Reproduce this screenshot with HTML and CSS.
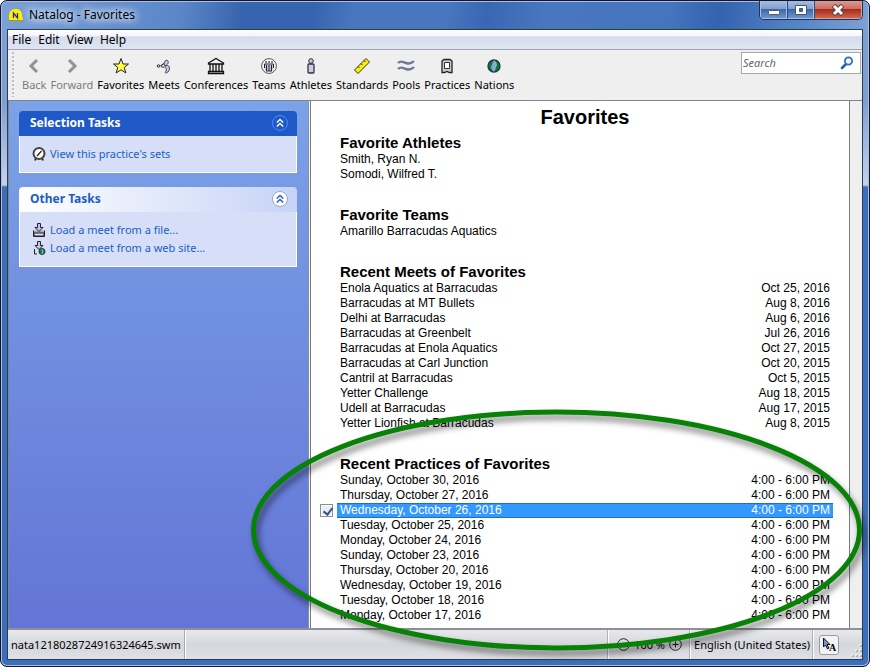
FILE: index.html
```html
<!DOCTYPE html>
<html lang="en">
<head>
<meta charset="utf-8">
<title>Natalog - Favorites</title>
<link rel="stylesheet" href="styles.css">
</head>
<body>
<div class="window">
  <header class="titlebar">
    <svg class="app-icon" width="16" height="16" viewBox="0 0 16 16"><path d="M1 13V8a6 6 0 0 1 6-6h2a6 6 0 0 1 5 6l1 5z" fill="#ffee00"/><path d="M1 13.500h14" stroke="#a89a20"/><path d="M5.500 11V6l4 5V6" fill="none" stroke="#1a2da0" stroke-width="1.300"/></svg>
    <h1 class="window-title">Natalog - Favorites</h1>
    <div class="window-controls">
      <button class="control" type="button" aria-label="Minimize"><svg width="14" height="12" viewBox="0 0 14 12"><rect x="1.500" y="6.500" width="11" height="4" rx="1" fill="#fff" stroke="#4b5670"/></svg></button>
      <button class="control" type="button" aria-label="Maximize"><svg width="14" height="12" viewBox="0 0 14 12"><path fill-rule="evenodd" d="M1.500 1.500h11v9h-11zM5.500 4.500v3h3v-3z" fill="#fff" stroke="#4b5670"/></svg></button>
      <button class="control close" type="button" aria-label="Close"><svg width="14" height="12" viewBox="0 0 14 12"><path d="M2.500 1.500L11.500 10.500M11.500 1.500L2.500 10.500" stroke="#5a4048" stroke-width="5"/><path d="M3 2l8 8M11 2l-8 8" stroke="#fff" stroke-width="3"/></svg></button>
    </div>
  </header>
  <div class="client">
    <nav class="menubar">
      <button type="button">File</button><button type="button">Edit</button><button type="button">View</button><button type="button">Help</button>
    </nav>
    <div class="toolbar">
      <div class="grip"></div>
      <div class="tools">
        <button type="button" disabled><svg width="18" height="18" viewBox="0 0 18 18"><path d="M12 3L6 9l6 6" fill="none" stroke="#929292" stroke-width="3"/></svg>Back</button>
        <button type="button" disabled><svg width="18" height="18" viewBox="0 0 18 18"><path d="M6 3l6 6-6 6" fill="none" stroke="#929292" stroke-width="3"/></svg>Forward</button>
        <button type="button"><svg width="18" height="18" viewBox="0 0 18 18"><path d="M9 1.500l2 5.500h5.500l-4.300 3.500 1.700 5.500L9 12.800 4.100 16l1.700-5.500L1.500 7H7z" fill="#ffff45" stroke="#222"/></svg>Favorites</button>
        <button type="button"><svg width="18" height="18" viewBox="0 0 18 18"><circle cx="3.500" cy="9" r="1.300" fill="#aaa" stroke="#444"/><path d="M5.500 9L9 6.500M6 9.500l3 1" stroke="#444" stroke-width="1.300"/><path d="M9 7c0-3 3-5 4-3s-1 4-3 5zM9.500 10c1-2 5-2 5 1 0 2-1 4-3 5-2 0-1-1-.500-2 1-2 0-3-1.500-4z" fill="#c8cbe8" stroke="#444"/></svg>Meets</button>
        <button type="button"><svg width="18" height="18" viewBox="0 0 18 18"><path d="M1.500 6L9 1.500 16.500 6v1h-15zM3 7v7M6 7v7M9 7v7M12 7v7M15 7v7M1.500 14.500h15v2h-15z" fill="none" stroke="#111" stroke-width="1.300"/></svg>Conferences</button>
        <button type="button"><svg width="18" height="18" viewBox="0 0 18 18"><circle cx="9" cy="9" r="7.400" fill="#f8f8fa" stroke="#555"/><path d="M4.500 7.500h9v6h-9z" fill="#c3c7e4"/><path d="M4.500 7v4M13.500 7v4M4.500 7h9M6.500 8v6M9 8v6M11.500 8v6M6 14h6" fill="none" stroke="#222"/><circle cx="6" cy="5" r="1" fill="#556"/><circle cx="9" cy="5" r="1" fill="#556"/><circle cx="12" cy="5" r="1" fill="#556"/></svg>Teams</button>
        <button type="button"><svg width="18" height="18" viewBox="0 0 18 18"><circle cx="9" cy="4" r="2.300" fill="#c3c7e4" stroke="#333"/><rect x="6" y="7" width="6" height="9" rx="1" fill="#c9cbea" stroke="#333" stroke-width="1.300"/></svg>Athletes</button>
        <button type="button"><svg width="18" height="18" viewBox="0 0 18 18"><path d="M1.500 13L13 1.500 16.500 5 5 16.500z" fill="#ffee00" stroke="#333"/><path d="M5 9.500l1.500 1.500M8 6.500L9.500 8M11 3.500L12.500 5" stroke="#333"/></svg>Standards</button>
        <button type="button"><svg width="18" height="18" viewBox="0 0 18 18"><path d="M1 6c3-3 5-1 8 0s5 1 8-2M1 12c3-3 5-1 8 0s5 1 8-2" fill="none" stroke="#73779a" stroke-width="2.400"/></svg>Pools</button>
        <button type="button"><svg width="18" height="18" viewBox="0 0 18 18"><path d="M4 15.500V4L6 2.500h6L14 4v11.500h-2.500L9 14.500l-2.500 1z" fill="#c9c9d0" stroke="#222" stroke-width="1.300"/><path d="M6.500 5.500h5v6h-5z" fill="#fff" stroke="#333"/></svg>Practices</button>
        <button type="button"><svg width="18" height="18" viewBox="0 0 18 18"><circle cx="9" cy="9" r="6" fill="#087c36" stroke="#234" stroke-width="1.300"/><path d="M9 3.500C7 5 8 7 6.500 9s1 3 1.500 5.500c3 0 2-3 3.500-5S11 4 9 3.500z" fill="#82acd5"/></svg>Nations</button>
      </div>
      <label class="search"><input type="text" placeholder="Search" aria-label="Search"><svg width="14" height="14" viewBox="0 0 14 14"><path d="M6 8l-4 4" stroke="#285cae" stroke-width="2.600" stroke-linecap="round"/><circle cx="8.500" cy="5" r="3.600" fill="#eef5ff" stroke="#2e70bd" stroke-width="1.800"/></svg></label>
    </div>
    <main class="body">
      <aside class="sidebar">
        <section class="tasks primary">
          <header><h2>Selection Tasks</h2><button type="button" aria-label="Collapse Selection Tasks"><svg width="16" height="16" viewBox="0 0 16 16"><circle cx="8" cy="8" r="7.500"/><path d="M4.800 7.500L8 4.500l3.200 3M4.800 11.500L8 8.500l3.200 3"/></svg></button></header>
          <ul><li><svg width="14" height="14" viewBox="0 0 14 14"><path d="M4 11l-1 2.500M10 11l1 2.500" stroke="#333" stroke-width="2"/><circle cx="7" cy="6.500" r="5.500" fill="#fff" stroke="#444" stroke-width="2"/><path d="M5 9l4.500-5" stroke="#222" stroke-width="1.300"/></svg><a href="#">View this practice's sets</a></li></ul>
        </section>
        <section class="tasks">
          <header><h2>Other Tasks</h2><button type="button" aria-label="Collapse Other Tasks"><svg width="16" height="16" viewBox="0 0 16 16"><circle cx="8" cy="8" r="7.500"/><path d="M4.800 7.500L8 4.500l3.200 3M4.800 11.500L8 8.500l3.200 3"/></svg></button></header>
          <ul>
            <li><svg width="14" height="14" viewBox="0 0 14 14"><path d="M1.500 7.500v6h11v-6M2 10h10v3H2z" fill="#aaa" stroke="#222"/><path d="M5.500.500h3v4H11L7 8.500 3 4.500h2.500z" fill="#c3c3ee" stroke="#222"/></svg><a href="#">Load a meet from a file...</a></li>
            <li><svg width="14" height="14" viewBox="0 0 14 14"><path d="M5 13H2.500V8" fill="none" stroke="#222"/><path d="M5.500.500h3v4H11L7 8.500 3 4.500h2.500z" fill="#c3c3ee" stroke="#222"/><circle cx="10" cy="10.500" r="3" fill="#168044" stroke="#234"/><path d="M9.500 8l1.500 2-1 3" stroke="#8cb" fill="none"/></svg><a href="#">Load a meet from a web site...</a></li>
          </ul>
        </section>
      </aside>
      <div class="splitter"></div>
      <article class="page">
        <h2 class="page-title">Favorites</h2>
        <section><h3>Favorite Athletes</h3><table><tr><td>Smith, Ryan N.</td></tr><tr><td>Somodi, Wilfred T.</td></tr></table></section>
        <section><h3>Favorite Teams</h3><table><tr><td>Amarillo Barracudas Aquatics</td></tr></table></section>
        <section><h3>Recent Meets of Favorites</h3>
          <table>
            <tr><td>Enola Aquatics at Barracudas</td><td>Oct 25, 2016</td></tr>
            <tr><td>Barracudas at MT Bullets</td><td>Aug 8, 2016</td></tr>
            <tr><td>Delhi at Barracudas</td><td>Aug 6, 2016</td></tr>
            <tr><td>Barracudas at Greenbelt</td><td>Jul 26, 2016</td></tr>
            <tr><td>Barracudas at Enola Aquatics</td><td>Oct 27, 2015</td></tr>
            <tr><td>Barracudas at Carl Junction</td><td>Oct 20, 2015</td></tr>
            <tr><td>Cantril at Barracudas</td><td>Oct 5, 2015</td></tr>
            <tr><td>Yetter Challenge</td><td>Aug 18, 2015</td></tr>
            <tr><td>Udell at Barracudas</td><td>Aug 17, 2015</td></tr>
            <tr><td>Yetter Lionfish at Barracudas</td><td>Aug 8, 2015</td></tr>
          </table>
        </section>
        <section><h3>Recent Practices of Favorites</h3>
          <table>
            <tr><td>Sunday, October 30, 2016</td><td>4:00 - 6:00 PM</td></tr>
            <tr><td>Thursday, October 27, 2016</td><td>4:00 - 6:00 PM</td></tr>
            <tr class="selected"><td><input id="practice-1026" type="checkbox" checked><label for="practice-1026">Wednesday, October 26, 2016</label></td><td>4:00 - 6:00 PM</td></tr>
            <tr><td>Tuesday, October 25, 2016</td><td>4:00 - 6:00 PM</td></tr>
            <tr><td>Monday, October 24, 2016</td><td>4:00 - 6:00 PM</td></tr>
            <tr><td>Sunday, October 23, 2016</td><td>4:00 - 6:00 PM</td></tr>
            <tr><td>Thursday, October 20, 2016</td><td>4:00 - 6:00 PM</td></tr>
            <tr><td>Wednesday, October 19, 2016</td><td>4:00 - 6:00 PM</td></tr>
            <tr><td>Tuesday, October 18, 2016</td><td>4:00 - 6:00 PM</td></tr>
            <tr><td>Monday, October 17, 2016</td><td>4:00 - 6:00 PM</td></tr>
          </table>
        </section>
      </article>
    </main>
    <footer class="statusbar">
      <div class="cell file">nata1218028724916324645.swm</div>
      <div class="cell zoom">
        <button type="button" aria-label="Zoom out"><svg width="13" height="13" viewBox="0 0 13 13"><circle cx="6.500" cy="6.500" r="5.800"/><path d="M3.500 6.500h6"/></svg></button>
        <span>100 %</span>
        <button type="button" aria-label="Zoom in"><svg width="13" height="13" viewBox="0 0 13 13"><circle cx="6.500" cy="6.500" r="5.800"/><path d="M3.500 6.500h6M6.500 3.500v6"/></svg></button>
      </div>
      <div class="cell language">English (United States)</div>
      <div class="cell last">
        <button class="mode" type="button" aria-label="Text selection"><svg width="18" height="18" viewBox="0 0 18 18"><path d="M3.500 2v9l2-2 2 4 1.500-1-2-3.500H10z" fill="#7b94c8" stroke="#111"/></svg><span>A</span></button>
        <svg class="resize" width="11" height="15" viewBox="0 0 11 15"><path d="M9 2h2M5 7h2M9 7h2M1 12h2M5 12h2M9 12h2" stroke="#a9a9ad" stroke-width="2"/><path d="M8 1h2M4 6h2M8 6h2M0 11h2M4 11h2M8 11h2" stroke="#fff" stroke-width="1"/></svg>
      </div>
    </footer>
  </div>
  <svg class="callout" viewBox="0 0 611 242" preserveAspectRatio="none"><ellipse cx="305.500" cy="121" rx="303" ry="118"/></svg>
</div>
</body>
</html>
```
FILE: styles.css
```css
* { box-sizing: border-box; }
body { margin: 0; background: #fff; color: #000; font: 11px/16px "Noto Sans", "Liberation Sans", sans-serif; }
h1, h2, h3, ul { margin: 0; padding: 0; font-size: inherit; }
button { margin: 0; padding: 0; border: 0; background: none; color: inherit; font: inherit; }
svg { display: block; flex: none; }

.window {
  position: relative; display: flex; flex-direction: column; height: 100vh; overflow: hidden;
  padding: 0 6px 6px; border: 1px solid #10142c; border-radius: 7px;
  background:
    linear-gradient(100deg, #7da1d5 0, #5a86c8 180px, #3764ae 240px, #3764ae 310px, #4877bf 350px, #4877bf 440px, #3967b2 480px, #4877bf 540px, #4575bd 660px, #3463af 710px, #5b8aca 800px, #7ea3d6) top / 100% 30px no-repeat,
    linear-gradient(#7f9fd0, #7f9fd0 100px, #c4d2ea 184px, #3d6fb8 186px, #3d6fb8);
  box-shadow: inset 0 0 0 1px #a9c0e4;
}
.titlebar { display: flex; flex: none; height: 28px; padding-left: 1px; }
.app-icon { margin-top: 6px; }
.window-title { margin: 5px 0 0 5px; font-size: 12px; line-height: 18px; font-weight: 400; text-shadow: 0 0 6px #dce8fa, 0 0 8px #dce8fa, 0 0 10px #dce8fa; }
.window-controls { display: flex; height: 19px; margin-left: auto; border: 1px solid #1e3457; border-top: 0; border-radius: 0 0 5px 5px; overflow: hidden; }
.control { display: grid; place-items: center; width: 27px; border: 1px solid #a9c0e0; border-top: 0; background: linear-gradient(#a5bde0, #7f9ecd 50%, #3e68a8 50%, #6a96d0); }
.control + .control { border-left-color: #2c4a7a; }
.close { width: 48px; border-color: #e0a0a0; background: linear-gradient(#dc9a90, #cb6a5c 50%, #a82b1c 50%, #d0664c); }

.client { display: flex; flex: 1; flex-direction: column; min-height: 0; border: 1px solid #2a3c5c; background: #efefef; }
.menubar { display: flex; flex: none; gap: 7px; height: 20px; padding-left: 4px; border-bottom: 1px solid #a0a4ac; background: linear-gradient(#fff, #f4f6fb 30%, #d6dbec 36%, #e0e5f4); font-size: 12px; }
.toolbar { display: flex; flex: none; align-items: flex-start; height: 50px; padding: 2px 1px 0 4px; }
.grip { width: 2px; height: 45px; background: repeating-linear-gradient(#bdbdbd 0 2px, transparent 2px 4px); }
.tools { display: flex; gap: 4px; padding: 5px 0 0 8px; }
.tools button { display: flex; flex-direction: column; align-items: center; gap: 2px; }
.tools button:disabled { color: #7c7c7c; }
.search { display: flex; align-items: center; width: 120px; height: 22px; margin-left: auto; padding: 0 6px 0 1px; border: 1px solid #a5a9b2; background: #fff; }
.search input { flex: 1; min-width: 0; padding: 0; border: 0; outline: 0; background: none; font: inherit; font-style: italic; }
.search input::placeholder { color: #666; opacity: 1; }

.body { display: flex; flex: 1; min-height: 0; border-top: 1px solid #7d8494; padding-right: 12px; }
.sidebar { flex: none; width: 300px; padding: 10px 11px 10px 10px; border-left: 1px solid #7d8494; background: linear-gradient(#7ba2e7, #6375d6); }
.tasks { margin-bottom: 14px; color: #215dc6; }
.tasks header { display: flex; align-items: center; justify-content: space-between; height: 25px; padding: 0 9px 1px 11px; border-radius: 4px 4px 0 0; background: linear-gradient(90deg, #fff, #c6d3f7); font-size: 12px; }
.tasks ul { padding: 9px 12px; border: solid #fff; border-width: 0 1px 1px; background: #d6dff7; list-style: none; }
.tasks li { display: flex; align-items: center; gap: 4px; height: 18px; }
.tasks a { color: inherit; text-decoration: none; }
.tasks header circle { fill: #fff; stroke: #9ba6c8; }
.tasks header path { fill: none; stroke: #215dc6; stroke-width: 1.4; }
.tasks.primary header { background: #2058c8; color: #fff; }
.tasks.primary header circle { fill: #2058c8; stroke: #4a8cff; }
.tasks.primary header path { stroke: #fff; }
.splitter { flex: none; width: 2px; background: #f4f4f4; border-left: 1px solid #8a8f9c; }
.page { flex: 1; min-width: 0; padding: 4px 16px 0 26px; border: solid #767b88; border-width: 0 1px; background: #fff; font-family: "Liberation Sans", Arial, sans-serif; font-size: 12px; line-height: 15px; overflow: hidden; }
.page-title { margin-bottom: 6px; font-size: 20px; line-height: 24px; text-align: center; }
.page section { margin-bottom: 25px; }
.page h3 { padding: 0 0 2px 3px; font-size: 15px; line-height: 15px; }
.page table { width: 100%; border-collapse: separate; border-spacing: 0; }
.page td { position: relative; height: 15px; padding: 0 3px; }
.page td + td { text-align: right; }
.selected td { background: #3399ff; color: #fff; box-shadow: inset 0 1px #1f6fc4, inset 0 -1px #1f6fc4; }
.selected input { position: absolute; left: -17px; top: 1px; width: 13px; height: 13px; margin: 0; appearance: none; border: 1px solid #8e8f8f; background: #e8edf8; box-shadow: inset 0 0 0 1px #fff; }
.selected input:checked::after { content: ""; position: absolute; left: 4px; top: 1px; width: 4px; height: 7px; border: solid #3a4f96; border-width: 0 2px 2px 0; transform: rotate(38deg); }

.statusbar { display: flex; flex: none; height: 31px; border-top: 2px solid #8f9094; background: linear-gradient(#e8e9ec, #d6d7dc 50%, #dfe0e5); }
.cell { display: flex; align-items: center; padding: 0 3px; border-left: 1px solid #fff; box-shadow: -1px 0 #b0b1b6; }
.file { margin-right: auto; border-left: 0; box-shadow: 1px 0 #a9aaaf, 2px 0 #fff; }
.zoom { gap: 4px; padding: 0 8px; }
.zoom circle, .zoom path { fill: none; stroke: #222; }
.last { padding: 0 0 0 5px; }
.mode { display: flex; width: 20px; height: 20px; border: 1px solid #9b9ca0; border-radius: 3px; background: #f2f3f5; }
.mode span { margin: 6px 0 0 -9px; font: 700 10px/12px "Liberation Serif", serif; }
.resize { align-self: flex-end; margin-left: 12px; }

.callout { position: absolute; left: 250px; right: 7px; top: 408px; width: calc(100% - 257px); height: 242px; overflow: visible; pointer-events: none; filter: drop-shadow(3px 5px 3px rgba(0, 0, 0, .5)); }
.callout ellipse { fill: none; stroke: #078207; stroke-width: 5; }
```
